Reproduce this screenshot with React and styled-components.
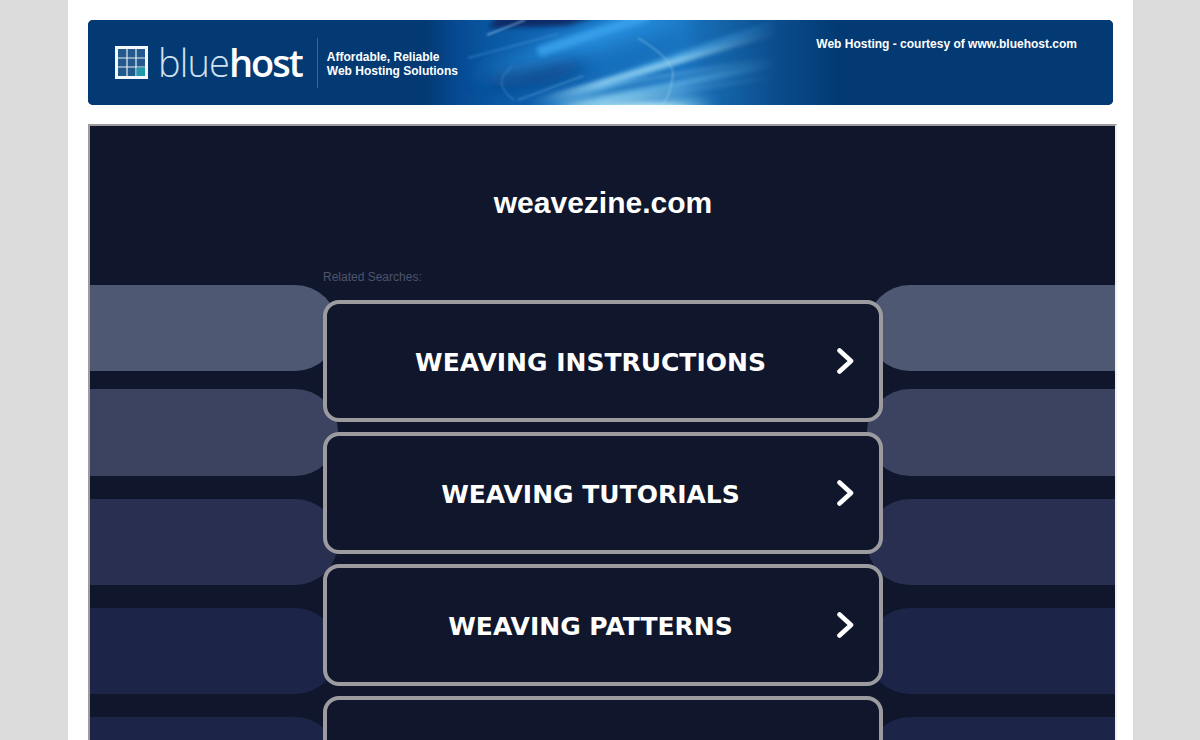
import styled, { createGlobalStyle } from "styled-components"

const GlobalStyle = createGlobalStyle`
  html, body {
    margin: 0;
    height: 100%;
    overflow: hidden;
    background: #dcdcdc;
    font-family: "Liberation Sans", Arial, sans-serif;
  }
`

const Column = styled.div`
  width: 1025px;
  height: 740px;
  margin-left: 68px;
  padding: 20px 20px 0;
  background: #fff;
`

const Banner = styled.div`
  position: relative;
  display: flex;
  height: 85px;
  border-radius: 5px;
  overflow: hidden;
  background: #033a74;
  color: #fff;
`

const BannerArt = styled.svg`
  position: absolute;
  left: 0;
  top: 0;
`

const Brand = styled.div`
  position: relative;
  display: flex;
  align-items: center;
  height: 85px;
  padding-left: 27px;
`

const LogoName = styled.div`
  margin-left: 10px;
  font-family: "Open Sans", sans-serif;
  font-size: 38px;
  font-weight: 300;
  letter-spacing: -0.9px;
  line-height: 85px;
  color: #cfe0ee;
`

const LogoBold = styled.span`
  font-weight: 600;
  letter-spacing: -2px;
  color: #fff;
`

const Divider = styled.div`
  width: 1px;
  height: 50px;
  margin: 0 9px 0 15px;
  background: #2a6ba3;
`

const Tagline = styled.div`
  font-size: 12px;
  font-weight: bold;
  line-height: 14px;
  padding-top: 3px;
`

const Courtesy = styled.div`
  position: relative;
  margin-left: auto;
  padding: 17px 36px 0 0;
  font-size: 12px;
  font-weight: bold;
  line-height: 14px;
`

const Frame = styled.div`
  position: relative;
  box-sizing: border-box;
  width: 1029px;
  height: 640px;
  margin-top: 19px;
  overflow: hidden;
  border-style: solid;
  border-width: 2px 2px 0;
  border-color: #9b9ba0 #f0f0f0 #f0f0f0 #9b9ba0;
  background: #10172c;
`

const Backdrop = styled.div`
  position: absolute;
  left: 0;
  right: 0;
  top: 159px;
`

const StripeRow = styled.div`
  display: flex;
  justify-content: space-between;
  height: ${p => p.$height}px;
  margin-top: ${p => p.$gap}px;
`

const Stripe = styled.div`
  width: 248px;
  background: ${p => p.$color};
  border-radius: ${p => (p.$side === "left" ? "0 43px 43px 0" : "43px 0 0 43px")};
`

const Content = styled.div`
  position: relative;
  width: 560px;
  margin-left: 233px;
`

const Title = styled.h1`
  margin: 0;
  padding-top: 58px;
  font-size: 30px;
  font-weight: bold;
  line-height: 38px;
  text-align: center;
  color: #fff;
`

const RelatedLabel = styled.div`
  margin-top: 48px;
  font-size: 12px;
  line-height: 14px;
  color: #4e546d;
`

const LinkList = styled.div`
  display: flex;
  flex-direction: column;
  gap: 10px;
  margin-top: 16px;
`

const LinkButton = styled.a`
  box-sizing: border-box;
  display: flex;
  align-items: center;
  height: 122px;
  padding-right: 25px;
  border: 4px solid #9b9ba0;
  border-radius: 16px;
  background: #10172c;
  color: #fff;
  text-decoration: none;
`

const LinkLabel = styled.span`
  flex: 1;
  padding: 2px 0 0 18px;
  font-family: "DejaVu Sans", Verdana, sans-serif;
  font-size: 25px;
  font-weight: bold;
  text-align: center;
`

const stripes = [
  { color: "#4f5873", height: 86, gap: 0 },
  { color: "#3c4361", height: 87, gap: 18 },
  { color: "#282f50", height: 86, gap: 23 },
  { color: "#1c2447", height: 86, gap: 23 },
  { color: "#1c2447", height: 86, gap: 23 },
]

const links = ["WEAVING INSTRUCTIONS", "WEAVING TUTORIALS", "WEAVING PATTERNS", ""]

const Chevron = () => (
  <svg width="18" height="28" viewBox="0 0 18 28">
    <path d="M3.5 3.5 L15 14 L3.5 24.5" fill="none" stroke="#fff" strokeWidth="4.6" strokeLinecap="round" strokeLinejoin="round" />
  </svg>
)

const LogoMark = () => (
  <svg width="33" height="33" viewBox="0 0 33 33">
    <rect width="33" height="33" fill="#f4f8fb" />
    <rect x="3" y="3" width="27" height="27" fill="#23598c" />
    <path d="M12 3 V30 M21 3 V30 M3 12 H30 M3 21 H30" stroke="#e6eef5" strokeWidth="1.2" />
    <rect x="21.6" y="21.6" width="8.4" height="8.4" fill="#1f9aa8" />
  </svg>
)

const Streak = ({ x1, y1, x2, y2, w, color, o, blur = "soft" }) => (
  <line x1={x1} y1={y1} x2={x2} y2={y2} stroke={color} strokeWidth={w} opacity={o} filter={`url(#${blur})`} />
)

const BannerGlow = () => (
  <BannerArt width="1025" height="85" viewBox="0 0 1025 85">
    <defs>
      <linearGradient id="base" x1="0" x2="1" y1="0" y2="0">
        <stop offset="0.33" stopColor="#033a74" />
        <stop offset="0.36" stopColor="#064a92" />
        <stop offset="0.4" stopColor="#0b5aa6" />
        <stop offset="0.5" stopColor="#176fbc" />
        <stop offset="0.58" stopColor="#1a74c0" />
        <stop offset="0.62" stopColor="#1463a8" />
        <stop offset="0.67" stopColor="#0b4d8d" />
        <stop offset="0.73" stopColor="#033a74" />
      </linearGradient>
      <linearGradient id="fade" gradientUnits="userSpaceOnUse" x1="440" x2="690" y1="0" y2="0">
        <stop offset="0" stopColor="#000" />
        <stop offset="0.3" stopColor="#fff" />
        <stop offset="0.6" stopColor="#fff" />
        <stop offset="1" stopColor="#000" />
      </linearGradient>
      <mask id="streakFade" maskUnits="userSpaceOnUse" x="0" y="0" width="1025" height="85">
        <rect width="1025" height="85" fill="url(#fade)" />
      </mask>
      <filter id="fine" filterUnits="userSpaceOnUse" x="0" y="-40" width="1025" height="165">
        <feGaussianBlur stdDeviation="0.8" />
      </filter>
      <filter id="soft" filterUnits="userSpaceOnUse" x="0" y="-40" width="1025" height="165">
        <feGaussianBlur stdDeviation="2.4" />
      </filter>
      <filter id="wide" filterUnits="userSpaceOnUse" x="0" y="-40" width="1025" height="165">
        <feGaussianBlur stdDeviation="10" />
      </filter>
    </defs>
    <rect width="1025" height="85" fill="url(#base)" />
    <ellipse cx="445" cy="52" rx="52" ry="12" fill="#0c3f80" opacity="0.9" filter="url(#wide)" transform="rotate(-10 445 52)" />
    <path d="M415 -10 L530 -10 L480 6 L400 8 Z" fill="#082a66" filter="url(#soft)" />
    <path d="M380 56 L470 20 L545 -6 L610 -6 L510 28 L430 50 Z" fill="#2a96e6" opacity="0.9" filter="url(#wide)" />
    <Streak x1={450} y1={32} x2={560} y2={-4} w={10} color="#3aa3ee" o={0.85} />
    <Streak x1={399} y1={15} x2={437} y2={0} w={1.4} color="#9ccdf0" o={0.7} blur="fine" />
    <Streak x1={380} y1={38} x2={470} y2={14} w={2} color="#4a9cd8" o={0.4} blur="fine" />
    <Streak x1={430} y1={80} x2={495} y2={56} w={1.4} color="#6fb5e4" o={0.45} blur="fine" />
    <g mask="url(#streakFade)">
      <Streak x1={430} y1={94} x2={690} y2={4} w={10} color="#58b2ea" o={0.75} />
      <Streak x1={440} y1={84} x2={690} y2={12} w={3.5} color="#c2eaf8" o={0.8} />
      <Streak x1={440} y1={78} x2={690} y2={38} w={3} color="#8bcdf0" o={0.55} />
      <Streak x1={440} y1={96} x2={690} y2={43} w={8} color="#74c2ec" o={0.6} />
      <Streak x1={480} y1={88} x2={690} y2={56} w={3} color="#9ad6f2" o={0.45} />
    </g>
    <ellipse cx="545" cy="92" rx="75" ry="14" fill="#a8e4f6" opacity="0.9" filter="url(#wide)" />
    <ellipse cx="555" cy="88" rx="45" ry="5" fill="#c4eefa" opacity="0.6" filter="url(#soft)" />
    <path d="M550 18 C570 30 590 46 584 60 C583 70 580 78 574 86" fill="none" stroke="#9dd4ec" strokeWidth="1.4" opacity="0.55" filter="url(#fine)" />
    <path d="M426 80 C412 70 408 58 424 47" fill="none" stroke="#6fb2de" strokeWidth="1.2" opacity="0.4" filter="url(#fine)" />
  </BannerArt>
)

const App = () => {
  return (
    <Column>
      <GlobalStyle />
      <Banner>
        <BannerGlow />
        <Brand>
          <LogoMark />
          <LogoName>blue<LogoBold>host</LogoBold></LogoName>
          <Divider />
          <Tagline>Affordable, Reliable<br />Web Hosting Solutions</Tagline>
        </Brand>
        <Courtesy>Web Hosting - courtesy of www.bluehost.com</Courtesy>
      </Banner>
      <Frame>
        <Backdrop>
          {stripes.map((s, i) => (
            <StripeRow key={i} $height={s.height} $gap={s.gap}>
              <Stripe $side="left" $color={s.color} />
              <Stripe $side="right" $color={s.color} />
            </StripeRow>
          ))}
        </Backdrop>
        <Content>
          <Title>weavezine.com</Title>
          <RelatedLabel>Related Searches:</RelatedLabel>
          <LinkList>
            {links.map((text, i) => (
              <LinkButton key={i} href="#">
                <LinkLabel>{text}</LinkLabel>
                <Chevron />
              </LinkButton>
            ))}
          </LinkList>
        </Content>
      </Frame>
    </Column>
  )
}

export default App
